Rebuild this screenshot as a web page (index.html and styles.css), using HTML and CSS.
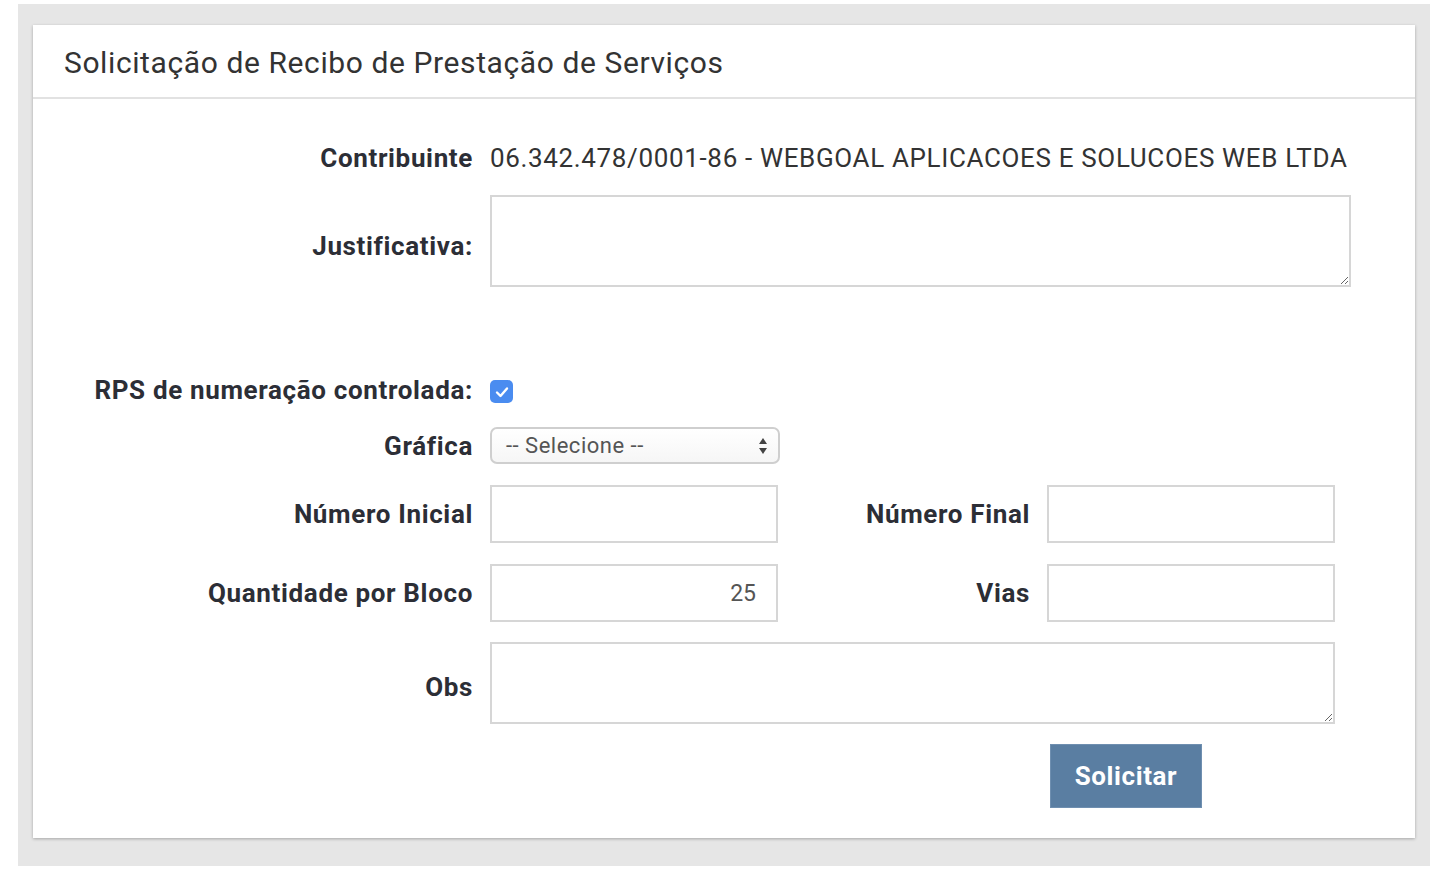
FILE: index.html
```html
<!DOCTYPE html>
<html lang="pt-BR">
<head>
<meta charset="utf-8">
<title>Solicitação de RPS</title>
<link rel="stylesheet" href="styles.css">
</head>
<body>
<div class="frame">
  <div class="card">
    <div class="card-header">
      <h1 class="title">Solicitação de Recibo de Prestação de Serviços</h1>
    </div>
    <form class="card-body">
      <div class="row row-contrib">
        <div class="label">Contribuinte</div>
        <div class="value">06.342.478/0001-86 - WEBGOAL APLICACOES E SOLUCOES WEB LTDA</div>
      </div>
      <div class="row row-justif">
        <label class="label label-top-justif">Justificativa:</label>
        <textarea class="textarea textarea-justif"></textarea>
      </div>
      <div class="row row-rps">
        <div class="label">RPS de numeração controlada:</div>
        <span class="checkbox">
          <svg width="14" height="12" viewBox="0 0 14 12"><path d="M2 6.5 L5.5 10 L12 2.5" fill="none" stroke="#fff" stroke-width="2.4" stroke-linecap="round" stroke-linejoin="round"/></svg>
        </span>
      </div>
      <div class="row row-grafica">
        <div class="label">Gráfica</div>
        <div class="select">
          <span class="select-text">-- Selecione --</span>
          <svg class="select-arrows" width="10" height="20" viewBox="0 0 10 20"><path d="M5 2 L9 8 L1 8 Z" fill="#444"/><path d="M5 18 L9 12 L1 12 Z" fill="#444"/></svg>
        </div>
      </div>
      <div class="row row-input">
        <div class="label">Número Inicial</div>
        <input class="input" type="text">
        <div class="label label-mid">Número Final</div>
        <input class="input" type="text">
      </div>
      <div class="row row-input">
        <div class="label">Quantidade por Bloco</div>
        <input class="input input-right" type="text" value="25">
        <div class="label label-mid">Vias</div>
        <input class="input" type="text">
      </div>
      <div class="row row-obs">
        <div class="label label-obs">Obs</div>
        <textarea class="textarea textarea-obs"></textarea>
      </div>
      <div class="row row-actions">
        <button type="button" class="btn">Solicitar</button>
      </div>
    </form>
  </div>
</div>
</body>
</html>
```

FILE: styles.css
```css
* { box-sizing: border-box; }
html, body { margin: 0; padding: 0; background: #fff; }
body { font-family: Roboto, "Liberation Sans", Arial, sans-serif; color: #333; }

.frame {
  margin: 4px 18px 10px 18px;
  width: 1412px;
  height: 862px;
  background: #e6e6e6;
  padding: 21px 15px 0 15px;
}
.card {
  background: #fff;
  height: 813px;
  box-shadow: 0 1px 3px rgba(0,0,0,0.28);
}
.card-header {
  height: 74px;
  border-bottom: 2px solid #e2e2e2;
  padding-left: 31px;
  display: flex;
  align-items: center;
}
.title {
  margin: 0;
  font-size: 30px;
  font-weight: 400;
  letter-spacing: 0.6px;
  color: #333;
  padding-top: 2px;
}
.card-body {
  padding-top: 40px;
  display: flex;
  flex-direction: column;
}
.row {
  display: flex;
  align-items: center;
}
.label {
  width: 457px;
  flex: none;
  text-align: right;
  padding-right: 17px;
  font-weight: 700;
  font-size: 26px;
  letter-spacing: 0.65px;
  color: #2c2e36;
}
.value {
  font-size: 26px;
  letter-spacing: 0.65px;
  color: #333;
}
.row-contrib { height: 38px; }
.row-justif { margin-top: 18px; align-items: flex-start; }
.label-top-justif { padding-top: 36px; }
.textarea {
  display: block;
  border: 2px solid #d6d6d6;
  border-radius: 0;
  background: #fff;
  font-family: inherit;
  font-size: 20px;
  resize: both;
  outline: none;
}
.textarea-justif { width: 861px; height: 92px; }
.row-rps { margin-top: 93px; height: 23px; }
.row-rps .label { padding-bottom: 3px; }
.checkbox {
  width: 23px;
  height: 23px;
  border-radius: 5px;
  background: #4a8cf0;
  display: flex;
  align-items: center;
  justify-content: center;
}
.row-grafica { margin-top: 24px; }
.select {
  width: 290px;
  height: 37px;
  border: 2px solid #cfcfcf;
  border-radius: 7px;
  background: linear-gradient(#fff, #f6f6f6);
  display: flex;
  align-items: center;
  justify-content: space-between;
  padding: 0 10px 0 14px;
}
.select-text { font-size: 22px; letter-spacing: 0.5px; color: #555; }
.row-input { margin-top: 21px; }
.input {
  width: 288px;
  height: 58px;
  border: 2px solid #d6d6d6;
  border-radius: 0;
  font-family: inherit;
  font-size: 23px;
  color: #555;
  padding: 0 20px;
  outline: none;
  background: #fff;
}
.input-right { text-align: right; }
.label-mid { width: 269px; }
.row-obs { margin-top: 20px; }
.label-obs { padding-top: 8px; }
.textarea-obs { width: 845px; height: 82px; }
.row-actions { margin-top: 20px; padding-left: 1017px; }
.btn {
  width: 152px;
  height: 64px;
  background: #5a7ea2;
  border: 1px solid #6f8fb0;
  color: #fff;
  font-family: inherit;
  font-weight: 700;
  font-size: 26px;
  letter-spacing: 0.6px;
  padding: 0;
}
```
